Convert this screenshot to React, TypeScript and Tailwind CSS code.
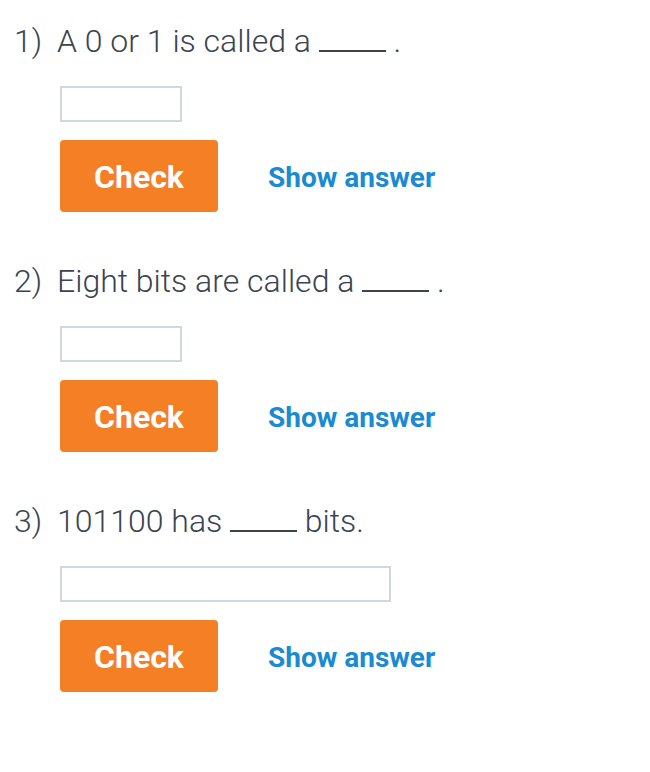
import React from "react";

const questions = [
  { pre: "A 0 or 1 is called a", post: " .", wide: false },
  { pre: "Eight bits are called a", post: " .", wide: false },
  { pre: "101100 has", post: " bits.", wide: true },
];

export default function App() {
  return (
    <div className="w-[650px] h-[772px] bg-white pt-[21px]" style={{ fontFamily: "Roboto, 'Liberation Sans', sans-serif" }}>
      {questions.map((q, i) => (
        <div key={i} className="h-[240px]">
          <div className="flex h-[40px] leading-[40px] text-[32px] font-light text-[#3a4550]">
            <span className="w-[57px] pl-[14px] shrink-0">{i + 1})</span>
            <span className="whitespace-pre">
              {q.pre} <span className="inline-block w-[67px] h-[2px] bg-[#3a4550] align-baseline"></span>
              {q.post}
            </span>
          </div>
          <div className="pl-[60px] mt-[25px]">
            <input
              type="text"
              className={`${q.wide ? "w-[331px]" : "w-[122px]"} h-[36px] border-2 border-[#cfd8dc] bg-white outline-none block`}
            />
          </div>
          <div className="pl-[60px] mt-[18px] flex items-center">
            <button className="w-[158px] h-[72px] rounded-[4px] bg-[#f47f24] text-white font-bold text-[32px] pt-[2px]">
              Check
            </button>
            <span className="ml-[50px] pt-[3px] text-[#1a8ad4] font-bold text-[28px]">Show answer</span>
          </div>
        </div>
      ))}
    </div>
  );
}
